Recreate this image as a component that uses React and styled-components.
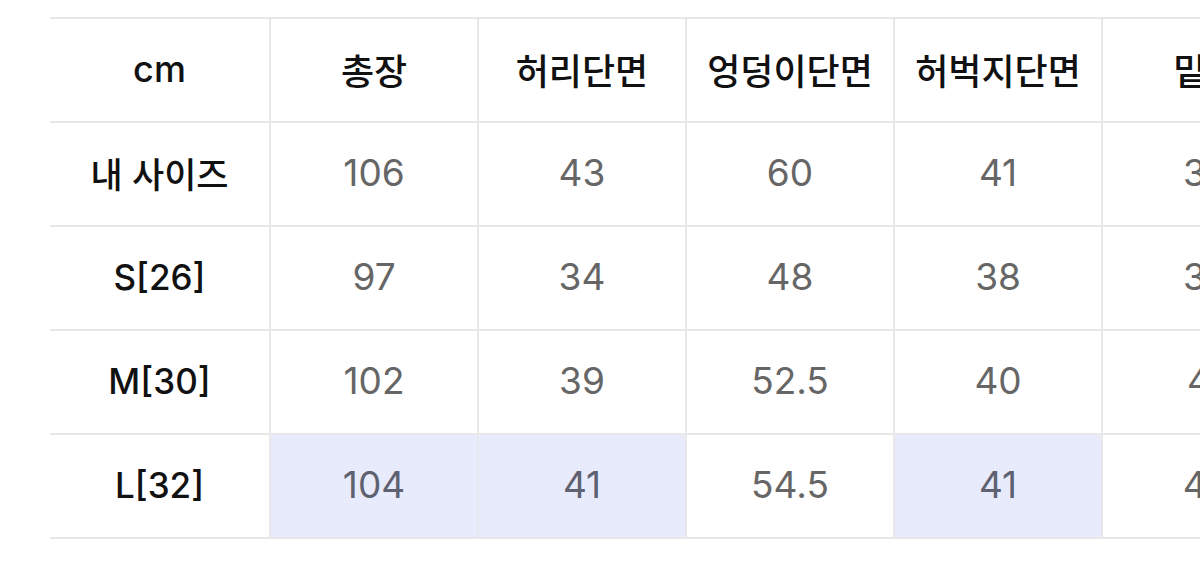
import React from 'react';
import styled, { createGlobalStyle } from 'styled-components';

const GlobalStyle = createGlobalStyle`
  html, body {
    margin: 0;
    padding: 0;
    background: #ffffff;
    overflow: hidden;
  }
  body {
    font-family: Inter, "Noto Sans CJK KR", sans-serif;
  }
`;

const Page = styled.div`
  width: 1200px;
  height: 567px;
  overflow: hidden;
  padding: 17px 0 0 50px;
  box-sizing: border-box;
`;

const SizeGrid = styled.div`
  display: grid;
  grid-template-columns: 219px repeat(6, 206px);
  grid-auto-rows: 102px;
  gap: 2px;
  padding: 2px 0;
  width: max-content;
  background: #e8e8e8;
`;

const Cell = styled.div`
  display: flex;
  align-items: center;
  justify-content: center;
  white-space: nowrap;
  padding-bottom: 3px;
  background: ${p => (p.$mark ? '#e8ebfb' : '#ffffff')};
`;

const HeadCell = styled(Cell)`
  font-size: 36px;
  font-weight: 500;
  color: #111111;
`;

const LabelCell = styled(Cell)`
  font-size: 35px;
  font-weight: 480;
  color: #111111;
`;

const ValueCell = styled(Cell)`
  font-size: 37px;
  font-weight: 400;
  color: ${p => (p.$mark ? '#5e6170' : '#666666')};
`;

const columns = ['cm', '총장', '허리단면', '엉덩이단면', '허벅지단면', '밑위', '밑단단면'];

const rows = [
  { label: '내 사이즈', values: ['106', '43', '60', '41', '30', '20'] },
  { label: 'S[26]', values: ['97', '34', '48', '38', '30', '19'] },
  { label: 'M[30]', values: ['102', '39', '52.5', '40', '41', '21'] },
  { label: 'L[32]', values: ['104', '41', '54.5', '41', '42', '22'], marks: [0, 1, 3] },
];

export default function App() {
  return (
    <Page>
      <GlobalStyle />
      <SizeGrid>
        {columns.map(c => (
          <HeadCell key={c}>{c}</HeadCell>
        ))}
        {rows.map(row => (
          <React.Fragment key={row.label}>
            <LabelCell>{row.label}</LabelCell>
            {row.values.map((v, i) => {
              const mark = row.marks && row.marks.includes(i);
              return (
                <ValueCell key={i} $mark={mark}>{v}</ValueCell>
              );
            })}
          </React.Fragment>
        ))}
      </SizeGrid>
    </Page>
  );
}
